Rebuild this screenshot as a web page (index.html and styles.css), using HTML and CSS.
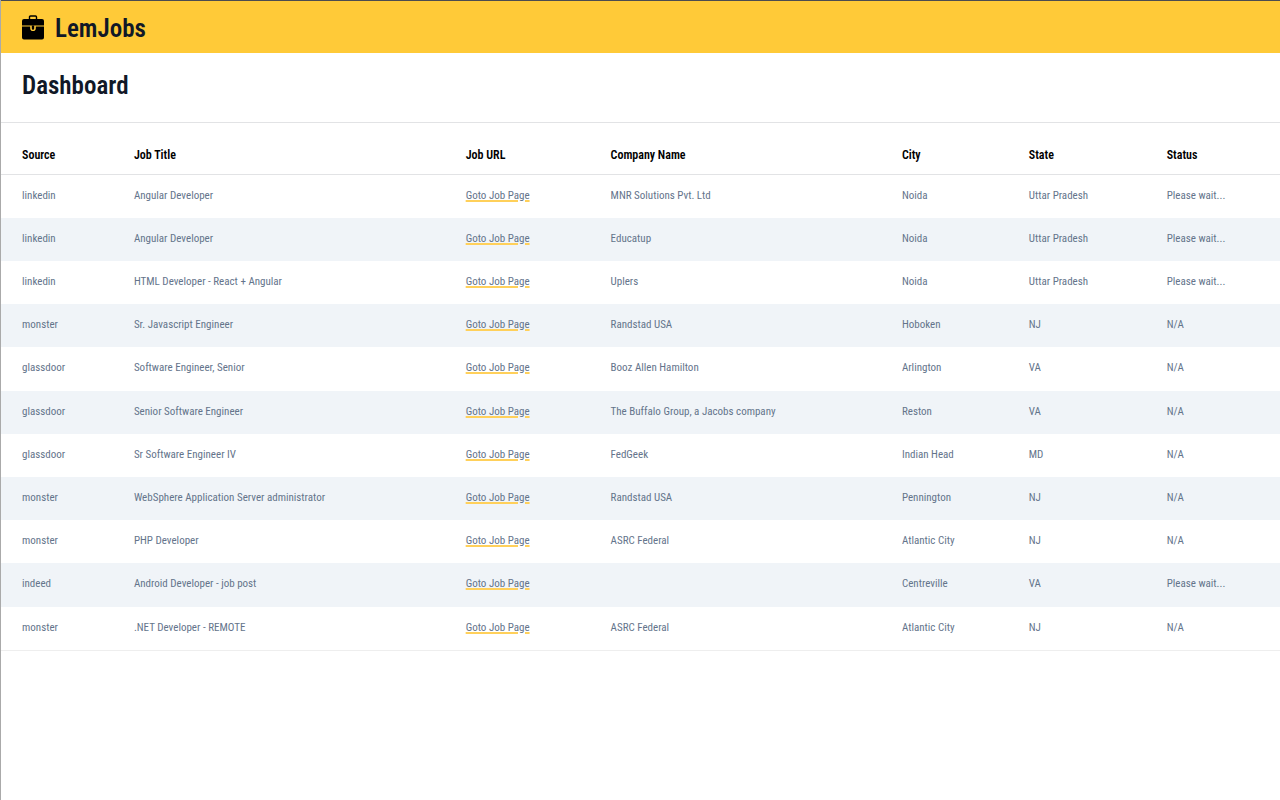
FILE: index.html
```html
<!DOCTYPE html>
<html lang="en">
<head>
<meta charset="utf-8">
<meta name="viewport" content="width=device-width, initial-scale=1">
<title>LemJobs</title>
<link rel="stylesheet" href="styles.css">
</head>
<body>
<header class="topbar">
<svg class="logo" viewBox="0 0 22 25" aria-hidden="true">
<path d="M7.500 4V2Q7.500 1 8.500 1h5q1 0 1 1V4" fill="none" stroke="#000" stroke-width="1.400"/>
<path d="M2 4h18q2 0 2 2v4.500H0V6q0-2 2-2z"/>
<path d="M0 11.500h8.200v1.800a2.800 2.800 0 0 0 5.600 0v-1.800H22v11q0 2-2 2H2q-2 0-2-2z"/>
<path d="M9.800 10.500h2.400v3a1.200 1.200 0 0 1-2.400 0z"/>
</svg>
<span class="brand">LemJobs</span>
</header>
<main>
<div class="heading"><h1 class="title">Dashboard</h1></div>
<table class="jobs">
<colgroup><col class="c-source"><col class="c-title"><col class="c-url"><col class="c-company"><col class="c-city"><col class="c-state"><col></colgroup>
<thead><tr><th>Source</th><th>Job Title</th><th>Job URL</th><th>Company Name</th><th>City</th><th>State</th><th>Status</th></tr></thead>
<tbody>
<tr><td>linkedin</td><td>Angular Developer</td><td><a href="#">Goto Job Page</a></td><td>MNR Solutions Pvt. Ltd</td><td>Noida</td><td>Uttar Pradesh</td><td>Please wait...</td></tr>
<tr><td>linkedin</td><td>Angular Developer</td><td><a href="#">Goto Job Page</a></td><td>Educatup</td><td>Noida</td><td>Uttar Pradesh</td><td>Please wait...</td></tr>
<tr><td>linkedin</td><td>HTML Developer - React + Angular</td><td><a href="#">Goto Job Page</a></td><td>Uplers</td><td>Noida</td><td>Uttar Pradesh</td><td>Please wait...</td></tr>
<tr><td>monster</td><td>Sr. Javascript Engineer</td><td><a href="#">Goto Job Page</a></td><td>Randstad USA</td><td>Hoboken</td><td>NJ</td><td>N/A</td></tr>
<tr><td>glassdoor</td><td>Software Engineer, Senior</td><td><a href="#">Goto Job Page</a></td><td>Booz Allen Hamilton</td><td>Arlington</td><td>VA</td><td>N/A</td></tr>
<tr><td>glassdoor</td><td>Senior Software Engineer</td><td><a href="#">Goto Job Page</a></td><td>The Buffalo Group, a Jacobs company</td><td>Reston</td><td>VA</td><td>N/A</td></tr>
<tr><td>glassdoor</td><td>Sr Software Engineer IV</td><td><a href="#">Goto Job Page</a></td><td>FedGeek</td><td>Indian Head</td><td>MD</td><td>N/A</td></tr>
<tr><td>monster</td><td>WebSphere Application Server administrator</td><td><a href="#">Goto Job Page</a></td><td>Randstad USA</td><td>Pennington</td><td>NJ</td><td>N/A</td></tr>
<tr><td>monster</td><td>PHP Developer</td><td><a href="#">Goto Job Page</a></td><td>ASRC Federal</td><td>Atlantic City</td><td>NJ</td><td>N/A</td></tr>
<tr><td>indeed</td><td>Android Developer - job post</td><td><a href="#">Goto Job Page</a></td><td></td><td>Centreville</td><td>VA</td><td>Please wait...</td></tr>
<tr><td>monster</td><td>.NET Developer - REMOTE</td><td><a href="#">Goto Job Page</a></td><td>ASRC Federal</td><td>Atlantic City</td><td>NJ</td><td>N/A</td></tr>
</tbody>
</table>
</main>
</body>
</html>
```
FILE: styles.css
```css
* { box-sizing: border-box; }
body {
  margin: 0;
  min-height: 100vh;
  border-left: 1px solid #aaa;
  background: #fff;
  color: #64748b;
  font-family: "Roboto Condensed", "Liberation Sans Narrow", "Liberation Sans", Arial, sans-serif;
  font-size: 11px;
  line-height: 18px;
}
.topbar {
  display: flex;
  align-items: center;
  gap: 11px;
  padding: 12px 21px 8px;
  border-top: 1px solid #4c4c50;
  background: #ffca38;
}
.logo { width: 22px; height: 25px; margin-bottom: 3px; }
.brand, .title {
  margin: 0;
  color: #111827;
  font-size: 25px;
  font-weight: 600;
  line-height: 32px;
}
.heading {
  padding: 17px 21px 20px;
  border-bottom: 1px solid #e2e3e5;
}
.jobs {
  width: 100%;
  table-layout: fixed;
  border-collapse: separate;
  border-spacing: 0;
  border-bottom: 1px solid #eee;
}
.c-source { width: 8.750%; }
.c-title { width: 25.940%; }
.c-url { width: 11.330%; }
.c-company { width: 22.780%; }
.c-city { width: 9.920%; }
.c-state { width: 10.780%; }
th, td { padding: 0 0 0 21px; text-align: left; white-space: nowrap; }
th {
  height: 52px;
  padding-top: 13px;
  border-bottom: 1px solid #e2e3e5;
  color: #000;
  font-size: 12px;
  font-weight: 600;
}
td { height: 43px; padding-bottom: 1px; }
tr:nth-child(5n) td { height: 44px; padding-bottom: 2px; }
tbody tr:nth-child(even) { background: #f0f4f8; }
a {
  color: inherit;
  text-decoration: underline;
  text-decoration-color: #ffd05a;
  text-decoration-thickness: 2px;
  text-underline-offset: 1px;
}
```
